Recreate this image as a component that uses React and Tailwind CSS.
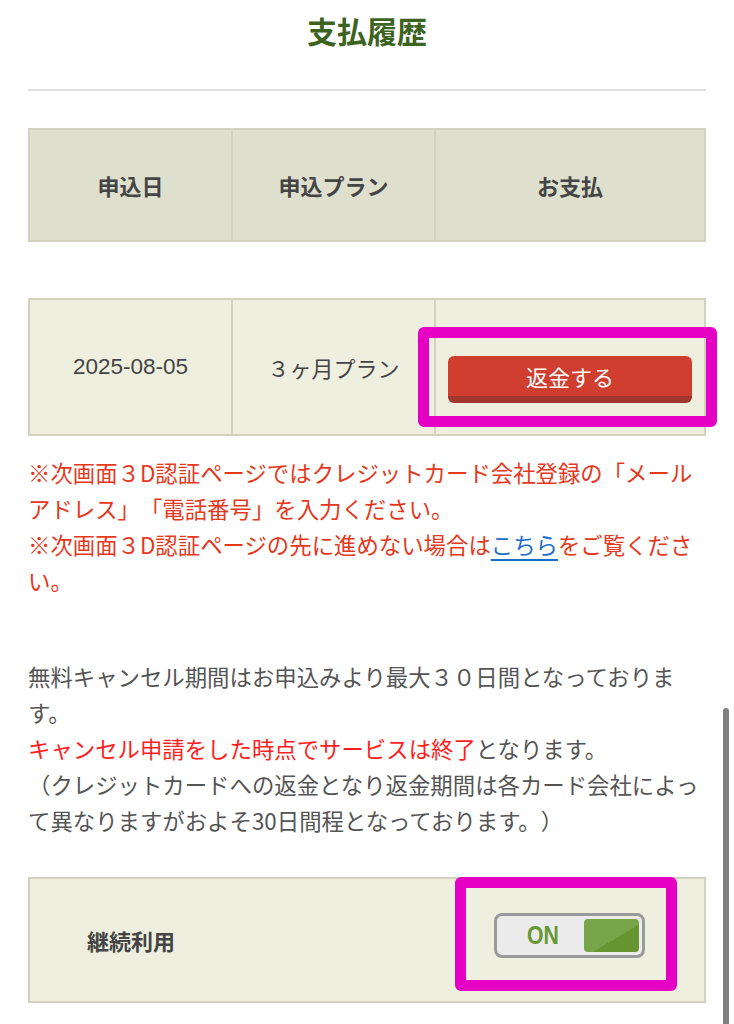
export default function App() {
  const jp = "font-['Noto_Sans_CJK_JP','Noto_Sans',sans-serif]";
  return (
    <div className={`relative h-[1024px] w-[734px] overflow-hidden bg-white px-[28px] [text-spacing-trim:space-all] ${jp}`}>
      {/* title */}
      <h1 className="pt-[9px] text-center text-[30px] font-bold leading-[42px] text-[#3c641f]">支払履歴</h1>
      <div className="mt-[38px] h-[2px] bg-[#dedede]" />

      {/* header table */}
      <div className="mt-[37px] flex h-[114px] border-2 border-[#d2d2bf] bg-[#dfdfce] text-[22px] font-bold text-[#454545]">
        <div className="flex w-[203px] items-center justify-center border-r-2 border-[#d2d2bf]">申込日</div>
        <div className="flex w-[203px] items-center justify-center border-r-2 border-[#d2d2bf]">申込プラン</div>
        <div className="flex flex-1 items-center justify-center">お支払</div>
      </div>

      {/* data row */}
      <div className="mt-[56px] flex h-[138px] border-2 border-[#d2d2bf] bg-[#efefdf] text-[22px] text-[#444]">
        <div className="flex w-[203px] items-center justify-center border-r-2 border-[#d2d2bf] font-['Liberation_Sans',sans-serif] text-[22.5px]">2025-08-05</div>
        <div className="flex w-[203px] items-center justify-center border-r-2 border-[#d2d2bf]">３ヶ月プラン</div>
        <div className="relative flex-1 px-[12px] pt-[56px]">
          <button className="flex h-[47px] w-full items-center justify-center rounded-[6px] border-b-[7px] border-[#a1372c] bg-[#d03e30] text-[22px] leading-none text-white">
            返金する
          </button>
          <div className="absolute left-[-18px] top-[27px] h-[100px] w-[299px] rounded-[6px] border-[11px] border-[#e600c4]" />
        </div>
      </div>

      {/* red notes */}
      <div className="mt-[18px] text-[22.4px] leading-[36px] text-[#e5381c]">
        <p>※次画面３D認証ページではクレジットカード会社登録の「メールアドレス」「電話番号」を入力ください。</p>
        <p>
          ※次画面３D認証ページの先に進めない場合は
          <span className="text-[#1d6ec8] underline underline-offset-[5px]">こちら</span>
          をご覧ください。
        </p>
      </div>

      {/* body */}
      <div className="mt-[60px] text-[22.4px] leading-[36px] text-[#555]">
        <p>無料キャンセル期間はお申込みより最大３０日間となっております。</p>
        <p>
          <span className="text-[#ff1e1e]">キャンセル申請をした時点でサービスは終了</span>となります。
        </p>
        <p>（クレジットカードへの返金となり返金期間は各カード会社によって異なりますがおよそ30日間程となっております。）</p>
      </div>

      {/* continuation */}
      <div className="mt-[39px] flex h-[126px] items-center justify-between border-2 border-[#d2d2bf] bg-[#efefdf] pl-[57px] pr-[59px]">
        <span className="text-[22px] font-bold text-[#444]">継続利用</span>
        <div className="relative mb-[9px] flex h-[45px] w-[151px] items-center rounded-[8px] border-[3px] border-[#9a9a9a] bg-[#ebebeb] pl-[30px] pr-[3px]">
          <span className="inline-block origin-left scale-x-[0.85] font-['Liberation_Sans',sans-serif] text-[25px] font-bold leading-none text-[#679834]">ON</span>
          <div className="ml-auto h-[33px] w-[55px] rounded-[4px] bg-[linear-gradient(to_top_left,#659430_42%,#79a54a_42%)]" />
          <div className="absolute left-[-42px] top-[-39px] h-[114px] w-[222px] rounded-[6px] border-[11px] border-[#e600c4]" />
        </div>
      </div>

      {/* scrollbar */}
      <div className="absolute left-[723px] top-[708px] h-[340px] w-[6px] rounded-full bg-[#808080]" />
    </div>
  );
}
